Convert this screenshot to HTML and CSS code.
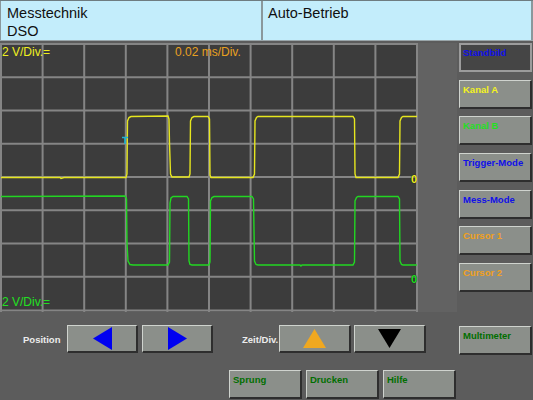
FILE: index.html
```html
<!DOCTYPE html>
<html>
<head>
<meta charset="utf-8">
<link rel="stylesheet" href="styles.css">
</head>
<body>
<div class="app">
  <header class="header">
    <div class="panel panel-left">
      <div>Messtechnik</div>
      <div>DSO</div>
    </div>
    <div class="panel panel-right">
      <div>Auto-Betrieb</div>
    </div>
  </header>
  <div class="main">
    <div class="left">
      <div class="scope-wrap">
        <div class="scope">
          <svg class="scope-svg" width="418" height="269" viewBox="0 0 418 269">
            <g class="grid">
              <line x1="1" y1="0" x2="1" y2="269"/>
              <line x1="42.6" y1="0" x2="42.6" y2="269"/>
              <line x1="84.2" y1="0" x2="84.2" y2="269"/>
              <line x1="125.8" y1="0" x2="125.8" y2="269"/>
              <line x1="167.4" y1="0" x2="167.4" y2="269"/>
              <line x1="209" y1="0" x2="209" y2="269"/>
              <line x1="250.6" y1="0" x2="250.6" y2="269"/>
              <line x1="292.2" y1="0" x2="292.2" y2="269"/>
              <line x1="333.8" y1="0" x2="333.8" y2="269"/>
              <line x1="375.4" y1="0" x2="375.4" y2="269"/>
              <line x1="417" y1="0" x2="417" y2="269"/>
              <line x1="0" y1="1" x2="418" y2="1"/>
              <line x1="0" y1="34.25" x2="418" y2="34.25"/>
              <line x1="0" y1="67.5" x2="418" y2="67.5"/>
              <line x1="0" y1="100.75" x2="418" y2="100.75"/>
              <line x1="0" y1="134" x2="418" y2="134"/>
              <line x1="0" y1="167.25" x2="418" y2="167.25"/>
              <line x1="0" y1="200.5" x2="418" y2="200.5"/>
              <line x1="0" y1="233.75" x2="418" y2="233.75"/>
              <line x1="0" y1="267.5" x2="418" y2="267.5"/>
            </g>
            <path class="trace-a" d="M1,134.5 L60,134.5 L61,135.5 L64,134.5 L126,134.5 L127,131 L127.5,78 L129,74.5 L131,73.5 L168,73 L169,76 L169.5,100 L170.5,131 L172,134 L189,134 L190,131 L190.5,78 L192,74.5 L194,73.5 L208,73.5 L209.5,76 L210,132 L211,134.5 L253,134.5 L254.5,131 L255,78 L256.5,74.5 L258,73.5 L353,73.5 L354.5,76 L355,131 L356,134.5 L398,134.5 L399.5,131 L400,78 L401.5,74.5 L403,73.5 L417,73.5"/>
            <path class="trace-b" d="M1,153.5 L125,153 L126.5,156 L127,200 L128,218 L130,221.5 L133,222 L168,222 L169.5,219 L170,160 L171,155 L173,153.5 L187,153.5 L188.5,156 L189,218 L190,221.5 L192,222 L209,222 L210,219 L210.5,158 L212,154.5 L214,153.5 L252,153.5 L253.5,156 L254.5,218 L256,221.5 L258,222 L300,222 L301,223 L302,222 L353,222 L354.5,219 L355,158 L356.5,154.5 L358,153.5 L398,153.5 L399.5,156 L400,218 L401.5,221.5 L403,222 L417,222"/>
            <path class="trig" d="M122,94.5 H128 M125,94.5 V101"/>
          </svg>
          <span class="lbl lbl-a">2 V/Div.=</span>
          <span class="lbl lbl-t">0.02 ms/Div.</span>
          <span class="lbl lbl-b">2 V/Div.=</span>
          <span class="zero zero-a">0</span>
          <span class="zero zero-b">0</span>
        </div>
      </div>
      <div class="row row-pos">
        <span class="label label-pos">Position</span>
        <button class="btn arrow">
          <svg width="19" height="23" viewBox="0 0 19 23"><polygon points="0,11.5 19,0 19,23" fill="#0000f0"/></svg>
        </button>
        <button class="btn arrow">
          <svg width="19" height="23" viewBox="0 0 19 23"><polygon points="19,11.5 0,0 0,23" fill="#0000f0"/></svg>
        </button>
        <span class="label label-zeit">Zeit/Div.</span>
        <button class="btn arrow arrow-v">
          <svg width="23" height="19" viewBox="0 0 23 19"><polygon points="11.5,0 23,19 0,19" fill="#f0a820"/></svg>
        </button>
        <button class="btn arrow arrow-v">
          <svg width="23" height="19" viewBox="0 0 23 19"><polygon points="11.5,19 23,0 0,0" fill="#000000"/></svg>
        </button>
      </div>
      <div class="row row-bottom">
        <button class="btn wide txt-green">Sprung</button>
        <button class="btn wide txt-green">Drucken</button>
        <button class="btn wide txt-green">Hilfe</button>
      </div>
    </div>
    <div class="side">
      <button class="btn side-btn pressed txt-blue">Standbild</button>
      <button class="btn side-btn txt-yellow">Kanal A</button>
      <button class="btn side-btn txt-lime">Kanal B</button>
      <button class="btn side-btn txt-blue">Trigger-Mode</button>
      <button class="btn side-btn txt-blue">Mess-Mode</button>
      <button class="btn side-btn txt-orange">Cursor 1</button>
      <button class="btn side-btn txt-orange">Cursor 2</button>
      <button class="btn side-btn multi txt-green">Multimeter</button>
    </div>
  </div>
</div>
</body>
</html>
```

FILE: styles.css
```css
html, body {
  margin: 0;
  padding: 0;
}
body {
  width: 533px;
  height: 400px;
  overflow: hidden;
  background: #5c5c5c;
  font-family: "Liberation Sans", Arial, sans-serif;
}
.app {
  width: 533px;
  height: 400px;
  display: flex;
  flex-direction: column;
}
.header {
  display: flex;
  height: 41px;
  box-sizing: border-box;
  background: #c3edfb;
  border-top: 1px solid #6e7c80;
  border-bottom: 1px solid #9aa6aa;
}
.panel {
  box-sizing: border-box;
  padding: 3px 0 0 6px;
  font-size: 14.5px;
  line-height: 18px;
  color: #101010;
}
.panel-left {
  width: 263px;
  border-left: 1px solid #8a989c;
  border-right: 2px solid #8a989c;
}
.panel-right {
  flex: 1;
  padding-left: 5px;
  border-right: 2px solid #8a989c;
}
.main {
  display: flex;
  flex: 1;
  padding-top: 2px;
}
.left {
  width: 459px;
  display: flex;
  flex-direction: column;
}
.scope-wrap {
  width: 457px;
  height: 269px;
  background: #626262;
}
.scope {
  position: relative;
  width: 418px;
  height: 269px;
  background: #3c3c3c;
}
.scope-svg {
  display: block;
}
.grid line {
  stroke: #858585;
  stroke-width: 2;
}
.trace-a {
  fill: none;
  stroke: #e6e61e;
  stroke-width: 1.4;
}
.trace-b {
  fill: none;
  stroke: #22d622;
  stroke-width: 1.4;
}
.trig {
  fill: none;
  stroke: #1eb4d4;
  stroke-width: 1.6;
}
.lbl {
  position: absolute;
  font-size: 12px;
  line-height: 14px;
}
.lbl-a {
  left: 2px;
  top: 2px;
  color: #f0f020;
}
.lbl-t {
  left: 175px;
  top: 2px;
  color: #e8a020;
}
.lbl-b {
  left: 2px;
  top: 252px;
  color: #22e022;
}
.zero {
  position: absolute;
  left: 411px;
  font-size: 11px;
  font-weight: bold;
  line-height: 12px;
  text-shadow: 0 0 1px #000;
}
.zero-a {
  top: 130px;
  color: #f0f020;
}
.zero-b {
  top: 230px;
  color: #22e022;
}
.row {
  display: flex;
  align-items: center;
}
.row-pos {
  margin-top: 13px;
  height: 28px;
  padding-left: 23px;
}
.label {
  color: #ececec;
  font-size: 9.5px;
  font-weight: bold;
}
.label-pos {
  width: 44px;
}
.label-zeit {
  width: 37px;
  margin-left: 25px;
}
.btn {
  box-sizing: border-box;
  margin: 0;
  padding: 3px 0 0 3px;
  background: #8b8f8a;
  border-style: solid;
  border-width: 1px 2px 2px 1px;
  border-color: #cfd3ce #2e2e2e #2e2e2e #cfd3ce;
  font-family: "Liberation Sans", Arial, sans-serif;
  font-size: 9.5px;
  font-weight: bold;
  text-align: left;
  line-height: 11px;
  display: flex;
  align-items: flex-start;
}
.arrow {
  width: 71px;
  height: 28px;
  padding: 0;
  align-items: center;
  justify-content: center;
  margin-right: 4px;
}
.arrow svg {
  display: block;
}
.arrow-v {
  width: 72px;
  margin-right: 3px;
}
.row-bottom {
  margin-top: 17px;
  padding-left: 229px;
  gap: 4px;
  align-items: flex-start;
}
.wide {
  width: 73px;
  height: 29px;
}
.side {
  width: 73px;
  display: flex;
  flex-direction: column;
  gap: 7.7px;
}
.side-btn {
  width: 73px;
  height: 29px;
}
.pressed {
  background: #454545;
  border-width: 2px;
  border-color: #9c9c9c;
  padding: 2px 0 0 2px;
}
.multi {
  margin-top: 26px;
}
.txt-blue { color: #1010e8; }
.txt-yellow { color: #f4f420; }
.txt-lime { color: #22e022; }
.txt-orange { color: #f0a020; }
.txt-green { color: #006e00; }
```
